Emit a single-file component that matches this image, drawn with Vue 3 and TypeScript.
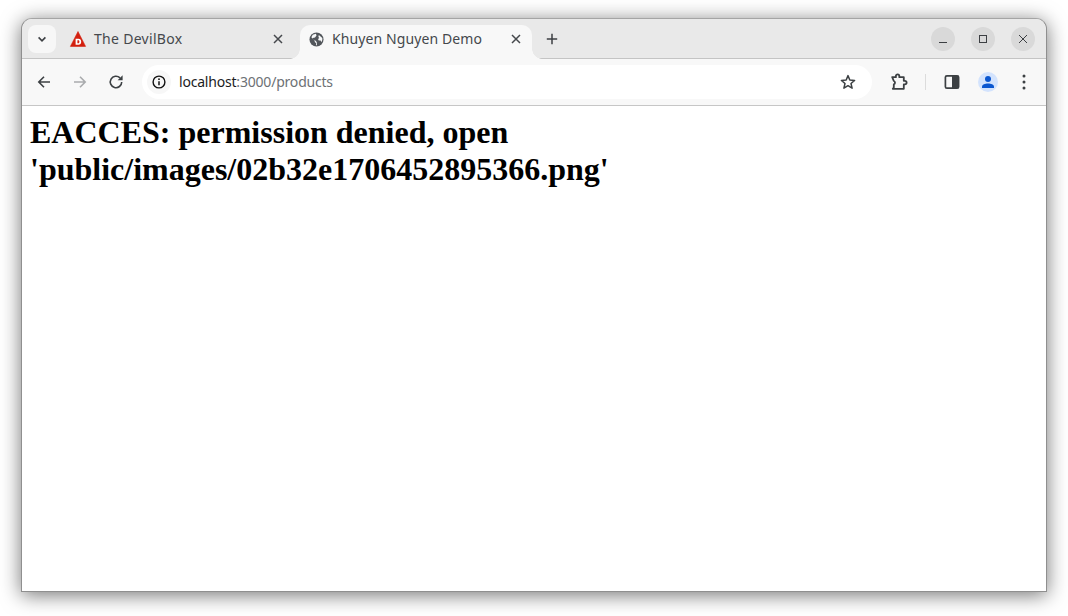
<script setup lang="ts">
const tabs = [
  { title: 'The DevilBox', active: false },
  { title: 'Khuyen Nguyen Demo', active: true },
];
</script>

<template>
  <div class="desktop">
    <div class="window">
      <div class="tabstrip">
        <button class="tab-search">
          <svg width="12" height="12" viewBox="0 0 12 12"><path d="M2.6 4.4 6 7.8l3.4-3.4" fill="none" stroke="#3c3f43" stroke-width="1.6" /></svg>
        </button>
        <div v-for="tab in tabs" :key="tab.title" class="tab" :class="{ active: tab.active }">
          <svg v-if="!tab.active" class="favicon" width="18" height="18" viewBox="0 0 18 18">
            <path d="M9 1.5 16.6 16.4H1.4Z" fill="#d3200f" stroke="#d3200f" stroke-width=".6" stroke-linejoin="round" />
            <path d="M6.6 8.8h2.9c1.7 0 2.7 1.2 2.7 3s-1 3-2.7 3H6.6Zm1.8 1.5v3h1c.6 0 1-.6 1-1.5s-.4-1.5-1-1.5Z" fill="#fff" fill-rule="evenodd" />
          </svg>
          <svg v-else class="favicon" width="15" height="15" viewBox="0 0 16 16">
            <circle cx="8" cy="8" r="7.5" fill="#52565b" />
            <path d="M2.5 5.5 6 9l.2 1.6L7.6 12v2h1l-.4-3.4L6.4 8.8 4.6 8 4 6.5l2.4-.6L8 3.8 7.4 1.8 4 3Zm8 -2.2L10 5.2l1 1.2-1.4 1 .8 1.6h2l.8 2 1-2.4V6.4Z" fill="#f8f9fa" />
          </svg>
          <span class="tab-title">{{ tab.title }}</span>
          <svg class="tab-close" width="10" height="10" viewBox="0 0 10 10"><path d="M1 1l8 8M9 1 1 9" stroke="#45484c" stroke-width="1.5" /></svg>
        </div>
        <button class="new-tab">
          <svg width="12" height="12" viewBox="0 0 12 12"><path d="M6 .8v10.4M.8 6h10.4" stroke="#3c3f43" stroke-width="1.5" /></svg>
        </button>
        <div class="window-buttons">
          <button class="win-btn">
            <svg width="10" height="10" viewBox="0 0 10 10"><path d="M1 8.5h8" stroke="#3c3f43" stroke-width="1" /></svg>
          </button>
          <button class="win-btn">
            <svg width="10" height="10" viewBox="0 0 10 10"><rect x="1.5" y="1.5" width="7" height="7" fill="none" stroke="#3c3f43" stroke-width="1" /></svg>
          </button>
          <button class="win-btn">
            <svg width="10" height="10" viewBox="0 0 10 10"><path d="M1 1l8 8M9 1 1 9" stroke="#3c3f43" stroke-width="1" /></svg>
          </button>
        </div>
      </div>

      <div class="toolbar">
        <button class="nav-btn">
          <svg width="14" height="14" viewBox="0 0 14 14"><path d="M13 7H2M7 1.8 1.8 7 7 12.2" fill="none" stroke="#3c4043" stroke-width="1.6" /></svg>
        </button>
        <button class="nav-btn">
          <svg width="14" height="14" viewBox="0 0 14 14"><path d="M1 7h11M7 1.8 12.2 7 7 12.2" fill="none" stroke="#a9abad" stroke-width="1.6" /></svg>
        </button>
        <button class="nav-btn">
          <svg width="16" height="16" viewBox="0 0 14 14"><path d="M12 7a5 5 0 1 1-1.5-3.6" fill="none" stroke="#3c4043" stroke-width="1.4" /><path d="M12.8 1v4.4H8.4Z" fill="#3c4043" /></svg>
        </button>
        <div class="omnibox">
          <span class="info-chip">
            <svg width="14" height="14" viewBox="0 0 14 14">
              <circle cx="7" cy="7" r="5.9" fill="none" stroke="#111" stroke-width="1.4" />
              <path d="M7 6.2v4" stroke="#111" stroke-width="1.5" />
              <circle cx="7" cy="4.2" r=".9" fill="#111" />
            </svg>
          </span>
          <span class="url"><span class="host">localhost</span>:3000/products</span>
          <svg class="star" width="16" height="16" viewBox="0 0 16 16"><path d="M8 1.6 9.8 6l4.8.4-3.6 3.1 1.1 4.7L8 11.7l-4.1 2.5L5 9.5 1.4 6.4 6.2 6Z" fill="none" stroke="#3c4043" stroke-width="1.5" stroke-linejoin="round" /></svg>
        </div>
        <div class="toolbar-actions">
          <svg width="18" height="18" viewBox="0 0 18 18"><path d="M2.2 4.2h3.7V3.1a1.7 1.7 0 0 1 3.4 0v1.1h4.5v3.6h1a1.8 1.8 0 0 1 0 3.6h-1v4.4H2.8l1-1.3v-3.1a1.8 1.8 0 0 0 0-3.4Z" fill="none" stroke="#3c4043" stroke-width="1.8" stroke-linejoin="round" /></svg>
          <span class="divider"></span>
          <svg width="16" height="16" viewBox="0 0 16 16"><rect x="1.4" y="1.8" width="13.2" height="12.4" rx="1.5" fill="none" stroke="#3c4043" stroke-width="1.7" /><rect x="8" y="1.8" width="6.6" height="12.4" fill="#3c4043" /></svg>
          <span class="avatar">
            <svg width="14" height="14" viewBox="0 0 14 14"><circle cx="7" cy="4" r="3" fill="#0b57d0" /><path d="M1 13v-1.4C1 9.6 4 8.4 7 8.4s6 1.2 6 3.2V13Z" fill="#0b57d0" /></svg>
          </span>
          <svg width="4" height="16" viewBox="0 0 4 16"><circle cx="2" cy="2" r="1.5" fill="#3c4043" /><circle cx="2" cy="8" r="1.5" fill="#3c4043" /><circle cx="2" cy="14" r="1.5" fill="#3c4043" /></svg>
        </div>
      </div>

      <div class="content">
        <h1>EACCES: permission denied, open<br />'public/images/02b32e1706452895366.png'</h1>
      </div>
    </div>
  </div>
</template>

<style>
html,
body {
  margin: 0;
  background: #fff;
}
</style>

<style scoped>
.desktop {
  box-sizing: border-box;
  width: 1068px;
  height: 616px;
  padding: 18px 21px 24px;
  overflow: hidden;
}

.window {
  box-sizing: border-box;
  height: 100%;
  width: 1026px;
  display: flex;
  flex-direction: column;
  border: 1px solid #8f8f8f;
  border-top-color: #a5a5a5;
  border-radius: 11px 11px 0 0;
  background: #fff;
  box-shadow: 0 3px 20px rgba(0, 0, 0, 0.55);
}

button {
  padding: 0;
  border: none;
  display: flex;
  align-items: center;
  justify-content: center;
  background: transparent;
}

.tabstrip {
  height: 40px;
  display: flex;
  align-items: flex-start;
  flex-shrink: 0;
  padding-left: 6px;
  background: #e9e9e9;
  border-bottom: 1px solid #c4c4c4;
  border-radius: 10px 10px 0 0;
  box-sizing: border-box;
}

.tab-search {
  width: 28px;
  height: 28px;
  margin-top: 6px;
  border-radius: 8px;
  background: #f7f7f7;
}

.tab {
  box-sizing: border-box;
  width: 242px;
  height: 40px;
  margin-left: 2px;
  padding: 0 17px 0 11px;
  display: flex;
  align-items: center;
  color: #45484c;
  font: 14px "Noto Sans", sans-serif;
  letter-spacing: 0.3px;
}

.tab.active {
  position: relative;
  width: 232px;
  height: 34px;
  margin: 6px 0 0;
  padding: 0 11px 6px 9px;
  border-radius: 10px 10px 0 0;
  background: #f8f8f8;
  letter-spacing: 0.1px;
  z-index: 1;
}

.tab.active::before,
.tab.active::after {
  content: "";
  position: absolute;
  bottom: 0;
  width: 10px;
  height: 10px;
}

.tab.active::before {
  left: -10px;
  background: radial-gradient(circle at 0 0, transparent 9.5px, #f8f8f8 10px);
}

.tab.active::after {
  right: -10px;
  background: radial-gradient(circle at 100% 0, transparent 9.5px, #f8f8f8 10px);
}

.favicon {
  flex-shrink: 0;
}

.tab-title {
  flex: 1;
  margin: 0 0 2px 7px;
  white-space: nowrap;
}

.tab.active .tab-title {
  margin-left: 8px;
}

.tab-close {
  flex-shrink: 0;
}

.new-tab {
  width: 28px;
  height: 28px;
  margin: 6px 0 0 6px;
}

.window-buttons {
  margin-left: auto;
  margin-top: 8px;
  padding-right: 11px;
  display: flex;
  gap: 16px;
}

.win-btn {
  width: 24px;
  height: 24px;
  border-radius: 50%;
  background: #d9d9d9;
}

.toolbar {
  box-sizing: border-box;
  height: 47px;
  flex-shrink: 0;
  display: flex;
  align-items: center;
  padding: 0 14px 0 4px;
  background: #f8f8f8;
  border-bottom: 1px solid #c6c6c6;
  position: relative;
}

.nav-btn {
  width: 36px;
  height: 36px;
}

.omnibox {
  box-sizing: border-box;
  width: 730px;
  height: 34px;
  margin-left: 8px;
  display: flex;
  align-items: center;
  padding: 0 16px 0 5px;
  border-radius: 17px;
  background: #fff;
}

.info-chip {
  width: 24px;
  height: 24px;
  border-radius: 50%;
  background: #f7f7f7;
  display: flex;
  align-items: center;
  justify-content: center;
}

.url {
  flex: 1;
  margin: 0 0 2px 8px;
  color: #6d7175;
  font: 14px "Noto Sans", sans-serif;
  letter-spacing: -0.2px;
}

.host {
  color: #1b1c1e;
}

.toolbar-actions {
  display: flex;
  align-items: center;
  margin-left: 18px;
  flex: 1;
}

.divider {
  width: 1px;
  height: 16px;
  margin: 0 18px 0 17px;
  background: #dcdcdc;
}

.avatar {
  width: 20px;
  height: 20px;
  margin: 0 24px 0 18px;
  border-radius: 50%;
  background: #d3e3fd;
  display: flex;
  align-items: center;
  justify-content: center;
}

.content {
  flex: 1;
  padding: 8px;
  background: #fff;
}

h1 {
  margin: 0;
  color: #000;
  font: bold 32px/37px "Liberation Serif", serif;
}
</style>
